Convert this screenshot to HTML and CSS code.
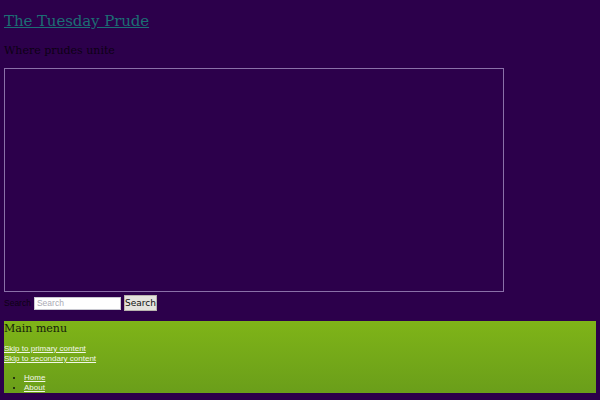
FILE: index.html
```html
<!DOCTYPE html>
<html>
<head>
<meta charset="utf-8">
<link rel="stylesheet" href="styles.css">
</head>
<body>
<header class="site-header">
  <h1 class="site-title"><a href="#">The Tuesday Prude</a></h1>
  <h2 class="site-description">Where prudes unite</h2>
  <div class="header-frame"></div>
  <form class="search-form">
    <label class="search-label">Search</label>
    <input class="search-input" type="text" placeholder="Search">
    <button class="search-button" type="button">Search</button>
  </form>
</header>
<nav class="main-nav">
  <h3 class="menu-title">Main menu</h3>
  <div class="skip"><a href="#">Skip to primary content</a></div>
  <div class="skip"><a href="#">Skip to secondary content</a></div>
  <ul class="menu">
    <li><a href="#">Home</a></li>
    <li><a href="#">About</a></li>
  </ul>
</nav>
</body>
</html>
```
FILE: styles.css
```css
html, body {
  background: #2c004b;
}
body {
  margin: 0;
  padding: 0 4px;
  height: 400px;
  overflow: hidden;
  font-family: "DejaVu Serif", serif;
}
.site-header {
  display: flex;
  flex-direction: column;
  align-items: flex-start;
}
.site-title {
  margin: 10px 0 0 0;
  font-family: "DejaVu Serif", serif;
  font-weight: normal;
  font-size: 15px;
  line-height: 22px;
  letter-spacing: -0.1px;
}
.site-title a {
  color: #1c6e74;
}
.site-description {
  margin: 12px 0 0 0;
  font-weight: normal;
  font-size: 11px;
  line-height: 14px;
  color: #0c0014;
}
.header-frame {
  margin-top: 10px;
  width: 498px;
  height: 222px;
  border: 1px solid #8a70a8;
}
.search-form {
  margin-top: 3px;
  display: flex;
  align-items: center;
  height: 16px;
  font-family: "Liberation Sans", Arial, sans-serif;
}
.search-label {
  font-size: 8.5px;
  color: #0c0014;
  margin-right: 3px;
}
.search-input {
  width: 87px;
  height: 13px;
  box-sizing: border-box;
  border: 1px solid #c8c8d0;
  padding: 0 2px;
  font-size: 8.5px;
  font-family: "Liberation Sans", Arial, sans-serif;
  background: #fff;
  margin: 0 3px 0 0;
}
.search-input::placeholder {
  color: #aaaab4;
}
.search-button {
  width: 33px;
  height: 16px;
  padding: 0;
  font-size: 9px;
  font-family: "DejaVu Sans", sans-serif;
  background: #e4e2de;
  border: 1px solid #b8b4ae;
  color: #111;
}
.main-nav {
  margin-top: 10px;
  height: 72px;
  background: linear-gradient(#7fb418, #6a9e1a);
  overflow: hidden;
}
.menu-title {
  margin: 0;
  padding-top: 1px;
  font-weight: normal;
  font-size: 11px;
  line-height: 14px;
  color: #14200a;
}
.skip {
  font-family: "Liberation Sans", Arial, sans-serif;
  font-size: 8px;
  line-height: 10px;
}
.skip:first-of-type {
  margin-top: 8px;
}
.skip a, .menu a {
  color: #f2f6e8;
}
.menu {
  margin: 9px 0 0 0;
  padding-left: 20px;
  font-family: "Liberation Sans", Arial, sans-serif;
  font-size: 8px;
  line-height: 10px;
  color: #111;
}
```
